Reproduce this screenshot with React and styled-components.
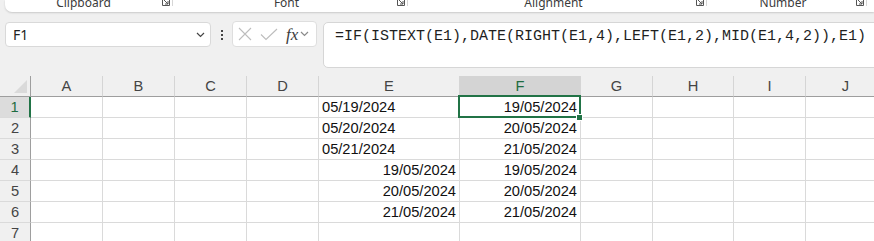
import styled, { createGlobalStyle } from 'styled-components';

const GlobalStyle = createGlobalStyle`
  html, body {
    margin: 0;
    padding: 0;
    background: #f0f0f0;
    overflow: hidden;
  }
  body {
    font-family: "Noto Sans", "Liberation Sans", sans-serif;
  }
`;

const Page = styled.div`
  width: 874px;
  height: 241px;
  overflow: hidden;
  background: #f0f0f0;
`;

// ribbon (only its bottom strip is visible)
const Ribbon = styled.div`
  display: flex;
  height: 12px;
  margin-left: 5px;
  background: #fff;
  border-bottom-left-radius: 7px;
  box-shadow: 0 1px 2px rgba(0, 0, 0, 0.16);
  overflow: hidden;
`;

const Group = styled.div`
  display: flex;
  flex-shrink: 0;
  width: ${p => p.$w}px;
`;

const GroupLabel = styled.div`
  flex: 1;
  margin-top: -4px;
  font-size: 12px;
  line-height: 14px;
  color: #3b3b3b;
  text-align: center;
`;

const Launcher = styled.div`
  display: flex;
  align-items: flex-start;
  gap: 2px;
  width: 12px;
  padding-right: 2px;
`;

const GroupDivider = styled.span`
  width: 1px;
  height: 6px;
  background: #d6d6d6;
`;

// formula bar row
const Toolbar = styled.div`
  display: flex;
  align-items: flex-start;
  margin-top: 9px;
  padding-left: 5px;
`;

const NameBox = styled.div`
  box-sizing: border-box;
  display: flex;
  align-items: center;
  justify-content: space-between;
  width: 206px;
  height: 25px;
  margin-top: 1px;
  padding: 0 5px 0 7px;
  background: #fff;
  border: 1px solid #d9d9d9;
  border-radius: 4px;
  font-size: 14px;
  color: #222;
`;

const Dots = styled.div`
  display: flex;
  flex-direction: column;
  align-items: center;
  justify-content: center;
  gap: 2px;
  width: 21px;
  height: 27px;

  span {
    width: 2px;
    height: 2px;
    background: #444;
  }
`;

const FxBox = styled.div`
  box-sizing: border-box;
  display: flex;
  align-items: center;
  width: 85px;
  height: 26px;
  padding: 0 1px 0 5px;
  background: #fff;
  border: 1px solid #dedede;
  border-radius: 4px;
`;

const Fx = styled.span`
  margin-left: 8px;
  font-family: "Liberation Serif", "DejaVu Serif", serif;
  font-style: italic;
  font-size: 17px;
  line-height: 1;
  color: #3c3c3c;
`;

const FormulaBar = styled.div`
  box-sizing: border-box;
  flex: 1;
  height: 46px;
  margin: 1px -8px 0 6px;
  padding: 4px 0 0 11px;
  background: #fff;
  border: 1px solid #d6d6d6;
  border-radius: 5px;
  font-family: "Liberation Mono", "DejaVu Sans Mono", monospace;
  font-size: 15px;
  line-height: 20px;
  color: #1f1f1f;
  white-space: nowrap;
`;

// sheet grid
const Sheet = styled.div`
  display: grid;
  grid-template-columns: 31px 72px 72px 72px 72px 141px 121px 72px 81px 72px 80px;
  grid-auto-rows: 21px;
  margin-top: 8px;
  font-family: "Liberation Sans", Arial, sans-serif;
  font-size: 14.67px;
`;

const Corner = styled.div`
  box-sizing: border-box;
  display: flex;
  align-items: flex-end;
  justify-content: flex-end;
  padding: 0 3px 3px 0;
  border-right: 1px solid #9e9e9e;
  border-bottom: 1px solid #9e9e9e;
`;

const ColHead = styled.div`
  box-sizing: border-box;
  padding-top: 1px;
  text-align: center;
  line-height: 19px;
  background: ${p => (p.$active ? '#d4d4d4' : '#f0f0f0')};
  color: ${p => (p.$active ? '#1e6c41' : '#444')};
  border-right: 1px solid #d5d5d5;
  border-bottom: 1px solid #9e9e9e;
`;

const RowHead = styled.div`
  box-sizing: border-box;
  text-align: center;
  line-height: 20px;
  background: ${p => (p.$active ? '#dcdcdc' : '#f0f0f0')};
  color: ${p => (p.$active ? '#1e6c41' : '#444')};
  border-right: ${p => (p.$active ? '2px solid #217346' : '1px solid #9e9e9e')};
  border-bottom: 1px solid #dadada;
`;

const Cell = styled.div`
  box-sizing: border-box;
  position: ${p => (p.$selected ? 'relative' : 'static')};
  padding: 1px 3px 0;
  line-height: 19px;
  text-align: ${p => p.$align || 'left'};
  white-space: nowrap;
  overflow: ${p => (p.$selected ? 'visible' : 'hidden')};
  background: #fff;
  color: #111;
  border-right: 1px solid #dadada;
  border-bottom: 1px solid #dadada;

  ${p => p.$selected && `
    &::after {
      content: '';
      position: absolute;
      left: -2px;
      top: -2px;
      right: -1px;
      bottom: -1px;
      border: 2px solid #217346;
    }
    &::before {
      content: '';
      position: absolute;
      right: -3px;
      bottom: -4px;
      width: 5px;
      height: 5px;
      background: #217346;
      border: 1px solid #fff;
      z-index: 1;
    }
  `}
`;

const columns = ['A', 'B', 'C', 'D', 'E', 'F', 'G', 'H', 'I', 'J'];

const data = {
  E: [
    { v: '05/19/2024', a: 'left' },
    { v: '05/20/2024', a: 'left' },
    { v: '05/21/2024', a: 'left' },
    { v: '19/05/2024', a: 'right' },
    { v: '20/05/2024', a: 'right' },
    { v: '21/05/2024', a: 'right' },
  ],
  F: [
    { v: '19/05/2024', a: 'right' },
    { v: '20/05/2024', a: 'right' },
    { v: '21/05/2024', a: 'right' },
    { v: '19/05/2024', a: 'right' },
    { v: '20/05/2024', a: 'right' },
    { v: '21/05/2024', a: 'right' },
  ],
};

const groups = [
  { label: 'Clipboard', w: 171 },
  { label: 'Font', w: 235 },
  { label: 'Alignment', w: 299 },
  { label: 'Number', w: 160 },
];

function LauncherIcon() {
  return (
    <svg width="8" height="8" viewBox="0 0 8 8" style={{ marginTop: -2 }}>
      <path d="M0.5 0.5 V7.5 H7.5 V0.5 M2 2 L6 6 M3 6 H6 V3" stroke="#555" strokeWidth="1" fill="none" />
    </svg>
  );
}

function Chevron({ color = '#444', w = 9 }) {
  return (
    <svg width={w} height="6" viewBox="0 0 9 6">
      <path d="M1 1 L4.5 4.5 L8 1" stroke={color} strokeWidth="1.2" fill="none" />
    </svg>
  );
}

function RowGroup({ row }) {
  return (
    <>
      <RowHead $active={row === 1}>{row}</RowHead>
      {columns.map(c => {
        const item = data[c] && data[c][row - 1];
        return (
          <Cell key={c} $align={item?.a} $selected={c === 'F' && row === 1}>
            {item?.v}
          </Cell>
        );
      })}
    </>
  );
}

export default function App() {
  return (
    <Page>
      <GlobalStyle />
      <Ribbon>
        {groups.map(g => (
          <Group key={g.label} $w={g.w}>
            <GroupLabel>{g.label}</GroupLabel>
            <Launcher>
              <LauncherIcon />
              <GroupDivider />
            </Launcher>
          </Group>
        ))}
      </Ribbon>

      <Toolbar>
        <NameBox>
          <span>F1</span>
          <Chevron />
        </NameBox>
        <Dots>
          <span />
          <span />
          <span />
        </Dots>
        <FxBox>
          <svg width="14" height="14" viewBox="0 0 14 14">
            <path d="M1 1 L13 13 M13 1 L1 13" stroke="#bdbdbd" strokeWidth="1.1" fill="none" />
          </svg>
          <svg width="18" height="13" viewBox="0 0 18 13" style={{ marginLeft: 8 }}>
            <path d="M1 6.5 L6 11.5 L17 1" stroke="#bdbdbd" strokeWidth="1.1" fill="none" />
          </svg>
          <Fx>fx</Fx>
          <span style={{ marginLeft: 2, display: 'flex' }}>
            <Chevron color="#8a8a8a" />
          </span>
        </FxBox>
        <FormulaBar>=IF(ISTEXT(E1),DATE(RIGHT(E1,4),LEFT(E1,2),MID(E1,4,2)),E1)</FormulaBar>
      </Toolbar>

      <Sheet>
        <Corner>
          <svg width="13" height="13" viewBox="0 0 13 13">
            <path d="M13 0 L13 13 L0 13 Z" fill="#dadada" />
          </svg>
        </Corner>
        {columns.map(c => (
          <ColHead key={c} $active={c === 'F'}>{c}</ColHead>
        ))}
        {[1, 2, 3, 4, 5, 6, 7].map(r => (
          <RowGroup key={r} row={r} />
        ))}
      </Sheet>
    </Page>
  );
}
